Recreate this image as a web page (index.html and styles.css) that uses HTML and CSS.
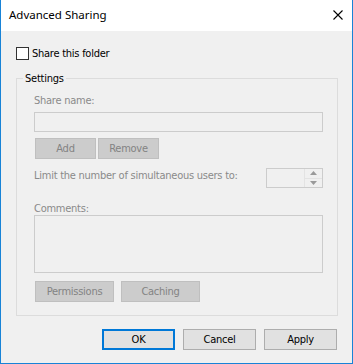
FILE: index.html
```html
<!DOCTYPE html>
<html>
<head>
<meta charset="utf-8">
<link rel="stylesheet" href="styles.css">
</head>
<body>
<div class="window">
  <div class="titlebar">
    <span class="title">Advanced Sharing</span>
    <svg class="close" width="10" height="10" viewBox="0 0 10 10"><path d="M0.5 0.5 L9.5 9.5 M9.5 0.5 L0.5 9.5" stroke="#000" stroke-width="1.1" fill="none"/></svg>
  </div>
  <div class="content">
    <label class="check-row"><span class="checkbox"></span><span class="check-label">Share this folder</span></label>
    <fieldset class="group">
      <legend>Settings</legend>
      <div class="label">Share name:</div>
      <div class="textbox"></div>
      <div class="btn-row tight">
        <button class="btn disabled">Add</button>
        <button class="btn disabled">Remove</button>
      </div>
      <div class="limit-row">
        <span class="label">Limit the number of simultaneous users to:</span>
        <div class="spin">
          <div class="spin-field"></div>
          <div class="spin-btns">
            <div class="spin-btn"><svg width="7" height="4" viewBox="0 0 7 4"><path d="M0 4 L3.5 0 L7 4 Z" fill="#9a9a9a"/></svg></div>
            <div class="spin-btn"><svg width="7" height="4" viewBox="0 0 7 4"><path d="M0 0 L7 0 L3.5 4 Z" fill="#9a9a9a"/></svg></div>
          </div>
        </div>
      </div>
      <div class="label comments">Comments:</div>
      <div class="textarea"></div>
      <div class="btn-row wide">
        <button class="btn disabled big">Permissions</button>
        <button class="btn disabled big">Caching</button>
      </div>
    </fieldset>
    <div class="footer">
      <button class="btn default">OK</button>
      <button class="btn">Cancel</button>
      <button class="btn">Apply</button>
    </div>
  </div>
</div>
</body>
</html>
```

FILE: styles.css
```css
* { box-sizing: border-box; }
html, body { margin: 0; padding: 0; }
body {
  font-family: "DejaVu Sans Condensed", "Liberation Sans", sans-serif;
  font-size: 11px;
  letter-spacing: -0.25px;
  color: #000;
  background: #fff;
}
.window {
  width: 353px;
  height: 364px;
  border: 1px solid #1883d7;
  border-top: none;
  background: #f0f0f0;
  display: flex;
  flex-direction: column;
}
.titlebar {
  height: 31px;
  background: #fff;
  display: flex;
  align-items: center;
  justify-content: space-between;
  padding: 0 9px 0 8px;
  flex: none;
}
.title {
  font-family: "Noto Sans", "Open Sans", sans-serif;
  font-size: 11.5px;
  letter-spacing: 0;
  line-height: 16px;
  margin-top: -1px;
}
.close { display: block; margin-top: -1px; }
.content {
  padding: 16px 14px 0 15px;
  flex: 1;
}
.check-row {
  display: flex;
  align-items: center;
  height: 13px;
}
.checkbox {
  width: 13px;
  height: 13px;
  border: 1px solid #333;
  background: #fff;
  flex: none;
}
.check-label {
  line-height: 16px;
  margin-left: 3px;
}
.group {
  margin: 9px 0 0 0;
  border: 1px solid #dcdcdc;
  padding: 6px 14px 13px 17px;
  min-width: 0;
}
.group legend {
  margin-left: -11px;
  padding: 2px 2px 0 2px;
  line-height: 16px;
  color: #000;
}
.label {
  color: #8a8a8a;
  line-height: 16px;
}
.textbox {
  margin-top: 3px;
  height: 20px;
  border: 1px solid #cccccc;
}
.btn {
  font-family: inherit;
  font-size: 11px;
  letter-spacing: -0.25px;
  height: 21px;
  width: 73px;
  padding: 0;
  margin: 0;
  border: 1px solid #adadad;
  background: #e1e1e1;
  color: #000;
  line-height: 18px;
}
.btn.disabled {
  background: #cccccc;
  border-color: #bfbfbf;
  color: #838383;
  width: 61px;
}
.btn.disabled.big { width: 79px; }
.btn.default {
  border: 2px solid #0078d7;
}
.btn-row {
  display: flex;
}
.btn-row.tight { margin-top: 6px; gap: 2px; margin-left: 1px; }
.btn-row.wide { margin-top: 8px; gap: 7px; margin-left: 1px; }
.limit-row {
  margin-top: 9px;
  display: flex;
  justify-content: space-between;
  align-items: flex-start;
}
.spin {
  width: 57px;
  height: 20px;
  border: 1px solid #cccccc;
  display: flex;
  flex: none;
}
.spin-field { flex: 1; }
.spin-btns {
  width: 18px;
  display: flex;
  flex-direction: column;
  border-left: 1px solid #e3e3e3;
}
.spin-btn {
  flex: 1;
  display: flex;
  align-items: center;
  justify-content: center;
}
.spin-btn + .spin-btn { border-top: 1px solid #e3e3e3; }
.spin-btn svg { display: block; }
.comments {
  margin-top: 15px;
  line-height: 12px;
}
.textarea {
  height: 58px;
  border: 1px solid #cccccc;
}
.footer {
  margin-top: 13px;
  display: flex;
  justify-content: flex-end;
  gap: 8px;
  padding-right: 1px;
}
```
